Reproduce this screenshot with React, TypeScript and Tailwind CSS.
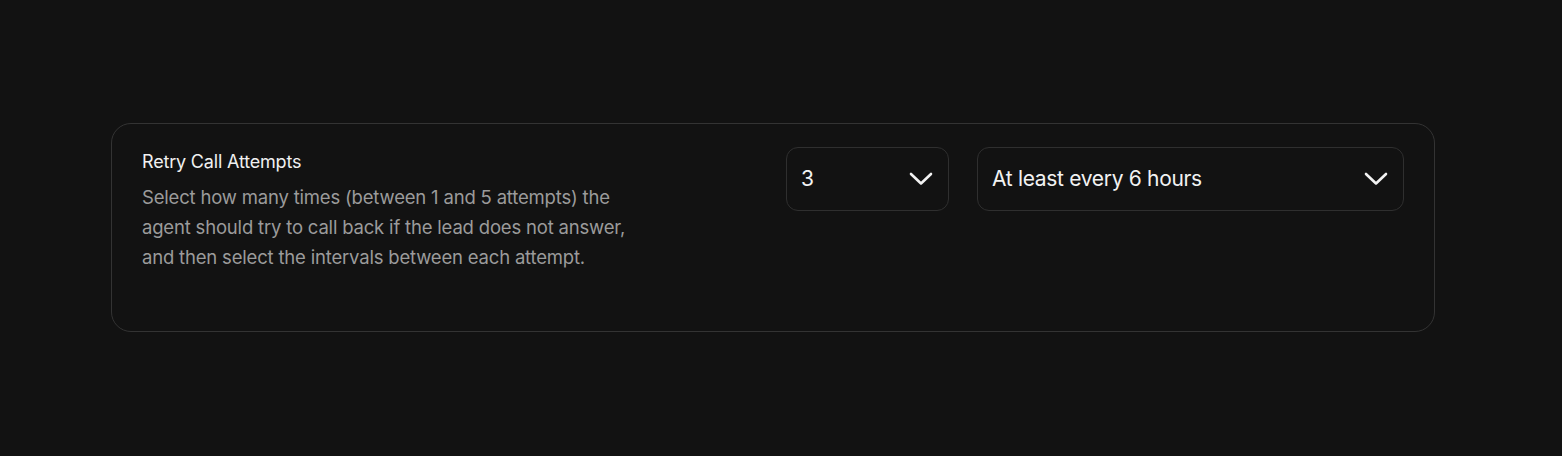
function Chevron() {
  return (
    <svg width="24" height="14" viewBox="0 0 24 14" fill="none" className="shrink-0">
      <path d="M2 2L12 11.5L22 2" stroke="currentColor" strokeWidth="2.6" strokeLinecap="round" strokeLinejoin="round" />
    </svg>
  );
}

function Select({ value, width }: { value: string; width: string }) {
  return (
    <button
      type="button"
      className={`${width} h-[64px] flex items-center justify-between pl-[14px] pr-[15px] rounded-[12px] border border-[#2f2f2f] bg-[#121212] text-[#f2f2f2] text-[21px] tracking-[-0.015em]`}
    >
      <span>{value}</span>
      <Chevron />
    </button>
  );
}

export default function App() {
  return (
    <div className="min-h-[456px] w-full bg-[#121212] pt-[123px] pl-[111px] pr-[127px] font-['Inter',sans-serif]">
      <div className="h-[209px] rounded-[20px] border border-[#333333] pl-[30px] pr-[30px] pt-[23px] flex justify-between">
        <div className="w-[500px] pt-[2px]">
          <div className="text-[18px] leading-[26px] text-[#f0f0f0] tracking-[-0.01em]">
            Retry Call Attempts
          </div>
          <p className="mt-[7px] text-[18.5px] leading-[30px] text-[#9b9b9b] tracking-[-0.01em]">
            Select how many times (between 1 and 5 attempts) the agent should try to call back if the lead does not answer, and then select the intervals between each attempt.
          </p>
        </div>
        <div className="flex gap-[28px] items-start">
          <Select value="3" width="w-[163px]" />
          <Select value="At least every 6 hours" width="w-[427px]" />
        </div>
      </div>
    </div>
  );
}
